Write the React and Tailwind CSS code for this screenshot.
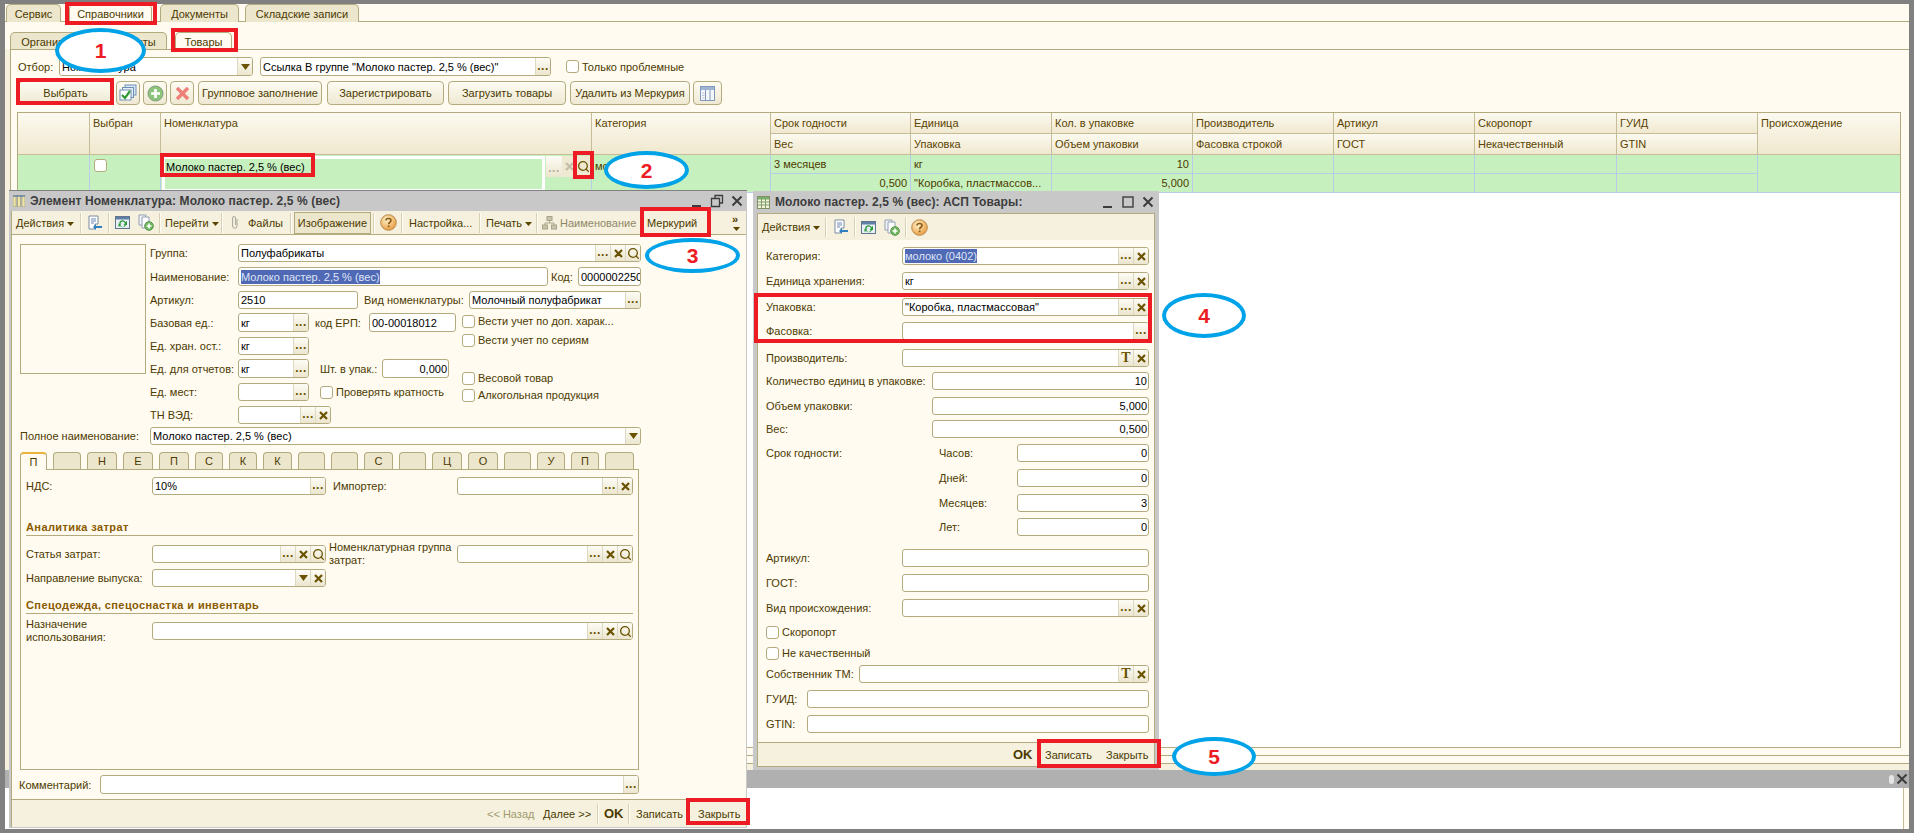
import React from "react";
import { Search } from "lucide-react";

const line = "border-[#b3ab7e]";

function Dots({ dim }) {
  return (
    <span className={`text-[12px] leading-none font-bold -mt-[1px] tracking-[0.5px] self-end pb-[3px] ${dim ? "text-[#b5b09a]" : "text-[#6b5200]"}`}>...</span>
  );
}

function Cross({ dim }) {
  return (
    <svg width="11" height="11" viewBox="0 0 11 11">
      <path d="M2 2 L9 9 M9 2 L2 9" stroke={dim ? "#c2bea8" : "#6b5200"} strokeWidth="2.2" fill="none" />
    </svg>
  );
}

function Arrow() {
  return (
    <svg width="9" height="6" viewBox="0 0 9 6">
      <path d="M0 0 H9 L4.5 6 Z" fill="#6b5200" />
    </svg>
  );
}

function Lens() {
  return <Search size={13} strokeWidth={2.4} className="text-[#6b5200]" />;
}

function Caret() {
  return (
    <svg width="7" height="4" viewBox="0 0 7 4" className="ml-[3px] mt-[2px]">
      <path d="M0 0 H7 L3.5 4 Z" fill="#5a4500" />
    </svg>
  );
}

function FieldBtn({ kind, w = "w-[15px]" }) {
  return (
    <div className={`${w} h-full flex items-center justify-center bg-gradient-to-b from-[#fdfcf5] to-[#ece6cf] border-l border-[#ddd8c0]`}>
      {kind === "dots" && <Dots />}
      {kind === "x" && <Cross />}
      {kind === "q" && <Lens />}
      {kind === "down" && <Arrow />}
      {kind === "t" && <span className="font-['Liberation_Serif',serif] font-bold text-[14px] leading-none text-[#6b5200]">T</span>}
    </div>
  );
}

function Field({ w, text, selected, right, btns = [], h = "h-[18px]" }) {
  return (
    <div className={`${w} ${h} shrink-0 flex border ${line} rounded-[3px] bg-white overflow-hidden`}>
      <div className={`flex-1 min-w-0 flex items-center whitespace-nowrap overflow-hidden text-black ${right ? "justify-end pr-[1px]" : "pl-[2px]"}`}>
        {selected ? <span className="bg-[#4f69b5] text-[#dfe4f5]">{text}</span> : text}
      </div>
      {btns.map((b, i) => (
        <FieldBtn key={i} kind={b} />
      ))}
    </div>
  );
}

function Check({ label, className = "" }) {
  return (
    <div className={`flex items-center h-[12px] ${className}`}>
      <div className={`w-[13px] h-[13px] shrink-0 border ${line} rounded-[3px] bg-white`} />
      <span className="ml-[3px] whitespace-nowrap">{label}</span>
    </div>
  );
}

function Sep({ className = "" }) {
  return <div className={`w-[2px] h-[20px] shrink-0 border-l border-[#d6d0b4] bg-[#fffdf5] ${className}`} />;
}

function SaveIcon() {
  return (
    <svg width="16" height="16" viewBox="0 0 16 16">
      <path d="M2 1 H11 V9 H8 V14 H2 Z" fill="#fff" stroke="#7c8aa0" />
      <path d="M4 4 H9 M4 6 H9 M4 8 H7" stroke="#6f87b5" />
      <path d="M15 11 H9 V9 L6 12 L9 15 V13 H15 Z" fill="#2f7fc0" />
    </svg>
  );
}

function RefreshIcon() {
  return (
    <svg width="15" height="15" viewBox="0 0 15 15">
      <rect x="0.5" y="1.5" width="14" height="12" fill="#e9f0f6" stroke="#62758c" />
      <rect x="1" y="2" width="13" height="2.5" fill="#5f7fa8" />
      <path d="M4 8 A3.5 3.5 0 0 1 10.5 7 L12 6 V10 H8.5 L9.8 8.8 A2 2 0 0 0 5.5 8.5 Z" fill="#2c9a3c" />
      <path d="M11 10 A3.5 3.5 0 0 1 5 11 L3.5 12 V8.5 H6.5 L5.5 9.8 A2 2 0 0 0 9.5 10 Z" fill="#2c9a3c" />
    </svg>
  );
}

function CopyIcon() {
  return (
    <svg width="16" height="17" viewBox="0 0 16 17">
      <path d="M1 1 H8 V11 H1 Z" fill="#f1f4f8" stroke="#93a0b2" />
      <path d="M4 3 H11 V14 H4 Z" fill="#fff" stroke="#93a0b2" />
      <circle cx="11" cy="12" r="4.3" fill="#6fb95f" stroke="#55904a" />
      <path d="M11 9.5 V14.5 M8.5 12 H13.5" stroke="#fff" strokeWidth="1.6" />
    </svg>
  );
}

function HelpIcon() {
  return (
    <svg width="17" height="17" viewBox="0 0 17 17">
      <defs>
        <radialGradient id="hg" cx="0.4" cy="0.35" r="0.7">
          <stop offset="0" stopColor="#fdf0c8" />
          <stop offset="1" stopColor="#e89a3c" />
        </radialGradient>
      </defs>
      <circle cx="8.5" cy="8.5" r="7.8" fill="url(#hg)" stroke="#b98a4a" />
      <path d="M6 6.5 C6 3.8 11 3.8 11 6.5 C11 8.3 8.6 8.2 8.6 10.2" stroke="#8a5a14" strokeWidth="1.6" fill="none" />
      <rect x="7.8" y="11.5" width="1.7" height="1.7" fill="#8a5a14" />
    </svg>
  );
}

function TreeIcon() {
  return (
    <svg width="15" height="14" viewBox="0 0 15 14">
      <rect x="5" y="0.5" width="5" height="4" fill="#c9c3ab" stroke="#a8a288" />
      <rect x="0.5" y="9" width="5" height="4" fill="#c9c3ab" stroke="#a8a288" />
      <rect x="9.5" y="9" width="5" height="4" fill="#c9c3ab" stroke="#a8a288" />
      <path d="M7.5 5 V7 H3 V9 M7.5 7 H12 V9" stroke="#a8a288" fill="none" />
    </svg>
  );
}

function ColumnsIcon() {
  return (
    <svg width="15" height="15" viewBox="0 0 15 15">
      <rect x="0.5" y="0.5" width="14" height="14" fill="#f3f6fb" stroke="#8298b8" />
      <rect x="1" y="1" width="13" height="3" fill="#9fb5d4" />
      <path d="M5.5 4 V14 M10 4 V14" stroke="#8298b8" />
      <path d="M2 7 H4.5 M2 9.5 H4.5 M2 12 H4.5" stroke="#b9c7dc" />
    </svg>
  );
}

function WinColumnsIcon() {
  return (
    <svg width="12" height="12" viewBox="0 0 12 12">
      <rect x="0" y="0" width="3" height="12" fill="#efe6a8" stroke="#8a8a6a" strokeWidth="0.6" />
      <rect x="4.5" y="0" width="3" height="12" fill="#efe6a8" stroke="#8a8a6a" strokeWidth="0.6" />
      <rect x="9" y="0" width="3" height="12" fill="#efe6a8" stroke="#8a8a6a" strokeWidth="0.6" />
      <path d="M0 1 H12" stroke="#5f7fa8" strokeWidth="1.4" />
    </svg>
  );
}

function WinGridIcon() {
  return (
    <svg width="13" height="13" viewBox="0 0 13 13">
      <rect x="0.5" y="0.5" width="12" height="12" fill="#f5f3dc" stroke="#7f8f6a" />
      <rect x="1" y="1" width="11" height="2.5" fill="#7bae6a" />
      <path d="M4.5 3 V12 M8.5 3 V12 M1 6 H12 M1 9 H12" stroke="#7f9f6a" />
    </svg>
  );
}

function StackIcon() {
  return (
    <svg width="18" height="18" viewBox="0 0 18 18">
      <rect x="6" y="1" width="11" height="10" fill="#d7e5f4" stroke="#6f8fb5" />
      <rect x="3.5" y="3.5" width="11" height="10" fill="#e4eef8" stroke="#6f8fb5" />
      <rect x="1" y="6" width="11" height="10" fill="#fff" stroke="#6f8fb5" />
      <path d="M3 11 L6 14 L11 7" stroke="#2f9a35" strokeWidth="2.2" fill="none" />
    </svg>
  );
}

function PlusIcon() {
  return (
    <svg width="17" height="17" viewBox="0 0 17 17">
      <circle cx="8.5" cy="8.5" r="7.5" fill="#8cc47c" stroke="#7f9a78" />
      <path d="M8.5 4 V13 M4 8.5 H13" stroke="#fff" strokeWidth="2.6" />
    </svg>
  );
}

function RedCross() {
  return (
    <svg width="15" height="15" viewBox="0 0 15 15">
      <path d="M2 2 L13 13 M13 2 L2 13" stroke="#ef8078" strokeWidth="3.4" />
    </svg>
  );
}

function ToolBtn({ w, children }) {
  return (
    <div className={`${w} h-[24px] shrink-0 flex items-center justify-center whitespace-nowrap border ${line} rounded-[4px] bg-gradient-to-b from-[#fdfcf3] to-[#efe9d2]`}>
      {children}
    </div>
  );
}

function Redbox({ className }) {
  return <div className={`absolute border-[4px] border-[#ed1c24] pointer-events-none ${className}`} />;
}

function Oval({ className, n }) {
  return (
    <div className={`absolute flex items-center justify-center rounded-[50%] border-[4px] border-[#00a2e8] bg-white ${className}`}>
      <span className="font-bold text-[#ed1c24] text-[21px] leading-none">{n}</span>
    </div>
  );
}

function MainTab({ w, active, children }) {
  return (
    <div className={`${w} h-[18px] flex items-center justify-center whitespace-nowrap rounded-t-[5px] border border-b-0 ${line} ${active ? "bg-[#fffbf0]" : "bg-[#ece6cd]"}`}>
      {children}
    </div>
  );
}

function Head({ className = "", children }) {
  return (
    <div className={`pl-[3px] pt-[3px] whitespace-nowrap border-r border-b border-[#c6bd98] bg-gradient-to-b from-[#fcfaf0] to-[#f0e8cf] text-[#5a4300] ${className}`}>
      {children}
    </div>
  );
}

function Cell({ className = "", children }) {
  return (
    <div className={`px-[3px] flex items-center whitespace-nowrap border-r border-b border-[#b8cbe8] bg-[#c6f0bd] ${className}`}>
      {children}
    </div>
  );
}

function Table() {
  return (
    <div className={`mt-[7px] h-[636px] mr-[8px] border ${line} bg-white`}>
      <div className="grid grid-cols-[72px_71px_431px_179px_140px_141px_141px_141px_141px_142px_141px_142px] grid-rows-[21px_21px_19px_19px]">
        <Head className="row-span-2" />
        <Head className="row-span-2">Выбран</Head>
        <Head className="row-span-2">Номенклатура</Head>
        <Head className="row-span-2">Категория</Head>
        <Head>Срок годности</Head>
        <Head>Единица</Head>
        <Head>Кол. в упаковке</Head>
        <Head>Производитель</Head>
        <Head>Артикул</Head>
        <Head>Скоропорт</Head>
        <Head>ГУИД</Head>
        <Head className="row-span-2 border-r-0">Происхождение</Head>
        <Head>Вес</Head>
        <Head>Упаковка</Head>
        <Head>Объем упаковки</Head>
        <Head>Фасовка строкой</Head>
        <Head>ГОСТ</Head>
        <Head>Некачественный</Head>
        <Head>GTIN</Head>

        <Cell className="row-span-2" />
        <Cell className="row-span-2 items-start pt-[4px]">
          <div className={`w-[13px] h-[13px] ml-[1px] border ${line} rounded-[3px] bg-white`} />
        </Cell>
        <Cell className="row-span-2 !px-0 items-start">
          <div className="w-[385px] h-[36px] ml-[1px] mt-[1px] border-[3px] border-[#ffffff] pl-[1px] pt-[1px] text-black">Молоко пастер. 2,5 % (вес)</div>
          <div className="h-[21px] ml-[1px] mt-[1px] flex bg-[#efe9d2]">
            <div className="w-[16px] h-full flex items-center justify-center bg-gradient-to-b from-[#fdfcf5] to-[#ece6cf]"><Dots dim /></div>
            <div className="w-[14px] h-full flex items-center justify-center"><Cross dim /></div>
            <div className="w-[15px] h-full flex items-center justify-center"><Lens /></div>
          </div>
        </Cell>
        <Cell className="row-span-2 items-start pt-[4px]">молоко (0402)</Cell>
        <Cell>3 месяцев</Cell>
        <Cell>кг</Cell>
        <Cell className="justify-end">10</Cell>
        <Cell />
        <Cell />
        <Cell />
        <Cell />
        <Cell className="row-span-2 border-r-0" />
        <Cell className="justify-end">0,500</Cell>
        <Cell>"Коробка, пластмассов...</Cell>
        <Cell className="justify-end">5,000</Cell>
        <Cell />
        <Cell />
        <Cell />
        <Cell />
      </div>
    </div>
  );
}

function WinTitle({ icon, title, controls, h }) {
  return (
    <div className={`${h} shrink-0 flex items-center bg-[#c8c8c8]`}>
      {icon}
      <span className="ml-[5px] font-bold text-[12px] tracking-[0.1px] text-[#3c3c3c] whitespace-nowrap">{title}</span>
      <div className="ml-auto flex items-center">{controls}</div>
    </div>
  );
}

function WinBtn({ kind, className = "" }) {
  return (
    <svg width="14" height="14" viewBox="0 0 14 14" className={className}>
      {kind === "min" && <rect x="2" y="11" width="9" height="2" fill="#3c3c3c" />}
      {kind === "max" && <rect x="2" y="2" width="10" height="10" fill="none" stroke="#3c3c3c" strokeWidth="1.4" />}
      {kind === "restore" && <path d="M5 4 V1.5 H12.5 V9 H10 M1.5 4.5 H9.5 V12.5 H1.5 Z" fill="none" stroke="#3c3c3c" strokeWidth="1.3" />}
      {kind === "x" && <path d="M2.5 2.5 L11.5 11.5 M11.5 2.5 L2.5 11.5" stroke="#3c3c3c" strokeWidth="2" />}
    </svg>
  );
}

function Heading({ className = "", children }) {
  return (
    <div className={`h-[16px] border-b ${line} font-bold tracking-[0.4px] text-[#8a5a00] whitespace-nowrap ${className}`}>
      {children}
    </div>
  );
}

const innerTabs = [
  ["П", "w-[27px]"], ["", "w-[28px]"], ["Н", "w-[30px]"], ["Е", "w-[30px]"], ["П", "w-[30px]"], ["С", "w-[28px]"],
  ["К", "w-[28px]"], ["К", "w-[29px]"], ["", "w-[27px]"], ["", "w-[27px]"], ["С", "w-[29px]"], ["", "w-[27px]"],
  ["Ц", "w-[30px]"], ["О", "w-[30px]"], ["", "w-[27px]"], ["У", "w-[28px]"], ["П", "w-[28px]"], ["", "w-[29px]"],
];

function ElementWindow() {
  return (
    <div className="absolute left-[9px] top-[190px] w-[738px] h-[638px] flex flex-col bg-[#c8c8c8] border-t border-[#808080]">
      <div className="pl-[4px] pr-[3px]">
        <WinTitle
          h="h-[20px]"
          icon={<WinColumnsIcon />}
          title="Элемент Номенклатура: Молоко пастер. 2,5 % (вес)"
          controls={
            <>
              <WinBtn kind="min" />
              <WinBtn kind="restore" className="ml-[6px]" />
              <WinBtn kind="x" className="ml-[6px]" />
            </>
          }
        />
      </div>
      <div className={`flex-1 ml-[2px] mr-[1px] mb-[1px] flex flex-col bg-[#fffbf0] border-l ${line}`}>
        <div className={`h-[24px] shrink-0 flex items-center pl-[4px] pr-[6px] bg-[#f5f1de] border-b ${line} whitespace-nowrap`}>
          <span className="w-[64px] flex items-center">Действия<Caret /></span>
          <Sep />
          <span className="ml-[5px]"><SaveIcon /></span>
          <Sep className="ml-[5px]" />
          <span className="ml-[5px]"><RefreshIcon /></span>
          <span className="ml-[8px]"><CopyIcon /></span>
          <Sep className="ml-[5px]" />
          <span className="ml-[4px] w-[56px] flex items-center">Перейти<Caret /></span>
          <Sep />
          <svg width="8" height="15" viewBox="0 0 8 15" className="ml-[8px]">
            <path d="M6 4 V11 A2.2 2.2 0 0 1 1.6 11 V3 A1.5 1.5 0 0 1 4.6 3 V10" fill="none" stroke="#a8a49a" strokeWidth="1" />
          </svg>
          <span className="ml-[9px] w-[37px]">Файлы</span>
          <Sep className="ml-[5px]" />
          <span className={`ml-[2px] w-[77px] h-[22px] flex items-center justify-center border ${line} bg-[#ece6cd]`}>Изображение</span>
          <Sep className="ml-[2px]" />
          <span className="ml-[5px]"><HelpIcon /></span>
          <Sep className="ml-[4px]" />
          <span className="ml-[6px] w-[65px]">Настройка...</span>
          <Sep className="ml-[5px]" />
          <span className="ml-[5px] w-[50px] flex items-center">Печать<Caret /></span>
          <Sep />
          <span className="ml-[4px]"><TreeIcon /></span>
          <span className="ml-[3px] w-[76px] text-[#8f8868]">Наименование</span>
          <span className="ml-[11px]">Меркурий</span>
          <div className="ml-auto flex flex-col items-center">
            <span className="text-[11px] leading-none font-bold">»</span>
            <Caret />
          </div>
        </div>

        <div className="pl-[8px] pt-[9px]">
          <div className="flex">
            <div className={`w-[126px] h-[130px] shrink-0 border ${line}`} />
            <div className="ml-[4px] w-[491px] whitespace-nowrap">
              <div className="flex items-center">
                <span className="w-[88px]">Группа:</span>
                <Field w="w-[403px]" text="Полуфабрикаты" btns={["dots", "x", "q"]} />
              </div>
              <div className="mt-[5px] flex items-center">
                <span className="w-[88px]">Наименование:</span>
                <Field w="w-[310px]" h="h-[19px]" text="Молоко пастер. 2,5 % (вес)" selected />
                <span className="ml-[3px] w-[27px]">Код:</span>
                <Field w="w-[63px]" h="h-[19px]" text="0000002250" />
              </div>
              <div className="mt-[5px] flex items-center">
                <span className="w-[88px]">Артикул:</span>
                <Field w="w-[120px]" text="2510" />
                <span className="ml-[6px] w-[105px]">Вид номенклатуры:</span>
                <Field w="w-[172px]" text="Молочный полуфабрикат" btns={["dots"]} />
              </div>
              <div className="flex">
                <div className="w-[312px]">
                  <div className="mt-[4px] flex items-center">
                    <span className="w-[88px]">Базовая ед.:</span>
                    <Field w="w-[71px]" h="h-[19px]" text="кг" btns={["dots"]} />
                    <span className="ml-[6px] w-[54px]">код ЕРП:</span>
                    <Field w="w-[87px]" h="h-[19px]" text="00-00018012" />
                  </div>
                  <div className="mt-[5px] flex items-center">
                    <span className="w-[88px]">Ед. хран. ост.:</span>
                    <Field w="w-[71px]" text="кг" btns={["dots"]} />
                  </div>
                  <div className="mt-[4px] flex items-center">
                    <span className="w-[88px]">Ед. для отчетов:</span>
                    <Field w="w-[71px]" h="h-[19px]" text="кг" btns={["dots"]} />
                    <span className="ml-[11px] w-[62px]">Шт. в упак.:</span>
                    <Field w="w-[67px]" h="h-[19px]" text="0,000" right />
                  </div>
                  <div className="mt-[5px] flex items-center">
                    <span className="w-[88px]">Ед. мест:</span>
                    <Field w="w-[71px]" text="" btns={["dots"]} />
                    <Check label="Проверять кратность" className="ml-[11px]" />
                  </div>
                  <div className="mt-[5px] flex items-center">
                    <span className="w-[88px]">ТН ВЭД:</span>
                    <Field w="w-[93px]" text="" btns={["dots", "x"]} />
                  </div>
                </div>
                <div>
                  <Check label="Вести учет по доп.  харак..." className="mt-[6px]" />
                  <Check label="Вести учет по сериям" className="mt-[7px]" />
                  <Check label="Весовой товар" className="mt-[26px]" />
                  <Check label="Алкогольная продукция" className="mt-[5px]" />
                </div>
              </div>
            </div>
          </div>

          <div className="mt-[3px] flex items-center">
            <span className="w-[130px] whitespace-nowrap">Полное наименование:</span>
            <Field w="w-[491px]" text="Молоко пастер. 2,5 % (вес)" btns={["down"]} />
          </div>

          <div className="mt-[7px] flex gap-[6px] h-[17px]">
            {innerTabs.map(([label, w], i) => (
              <div
                key={i}
                className={`${w} flex items-center justify-center rounded-t-[4px] border ${line} ${i === 0 ? "bg-[#fffbf0] border-b-0 border-t-[#e8b23c] border-t-2 h-[18px] z-10" : "bg-[#ece6cd] border-b-0"}`}
              >
                {label}
              </div>
            ))}
          </div>
          <div className={`w-[619px] h-[301px] border ${line} px-[5px]`}>
            <div className="mt-[7px] flex items-center">
              <span className="w-[126px]">НДС:</span>
              <Field w="w-[174px]" text="10%" btns={["dots"]} />
              <span className="ml-[7px] w-[124px]">Импортер:</span>
              <Field w="w-[176px]" text="" btns={["dots", "x"]} />
            </div>
            <Heading className="mt-[25px]">Аналитика затрат</Heading>
            <div className="mt-[9px] h-[18px] flex items-center">
              <span className="w-[126px]">Статья затрат:</span>
              <Field w="w-[174px]" text="" btns={["dots", "x", "q"]} />
              <span className="ml-[3px] w-[128px] leading-[13px]">Номенклатурная группа затрат:</span>
              <Field w="w-[176px]" text="" btns={["dots", "x", "q"]} />
            </div>
            <div className="mt-[6px] flex items-center">
              <span className="w-[126px] whitespace-nowrap">Направление выпуска:</span>
              <Field w="w-[174px]" text="" btns={["down", "x"]} />
            </div>
            <Heading className="mt-[11px]">Спецодежда, спецоснастка и инвентарь</Heading>
            <div className="mt-[8px] h-[18px] flex items-center">
              <span className="w-[126px] leading-[13px]">Назначение использования:</span>
              <Field w="w-[481px]" text="" btns={["dots", "x", "q"]} />
            </div>
          </div>
          <div className="mt-[5px] flex items-center">
            <span className="w-[81px] -ml-[1px]">Комментарий:</span>
            <Field w="w-[539px]" h="h-[19px]" text="" btns={["dots"]} />
          </div>
        </div>

        <div className={`mt-auto h-[28px] flex items-center justify-end pr-[5px] bg-[#f5f1de] border-t ${line} whitespace-nowrap`}>
          <span className="w-[56px] text-[#a39a70]">&lt;&lt; Назад</span>
          <span className="w-[54px]">Далее &gt;&gt;</span>
          <Sep />
          <span className="ml-[5px] w-[24px] font-bold text-[13px]">OK</span>
          <Sep />
          <span className="ml-[6px] w-[62px]">Записать</span>
          <span className="w-[43px]">Закрыть</span>
        </div>
      </div>
    </div>
  );
}

function AspRow({ className = "", label, children }) {
  return (
    <div className={`flex items-center whitespace-nowrap ${className}`}>
      {label}
      {children}
    </div>
  );
}

function AspWindow() {
  const lw = "w-[136px]";
  return (
    <div className="absolute left-[753px] top-[191px] w-[406px] h-[579px] flex flex-col bg-[#c8c8c8] px-[4px] pb-[3px]">
      <WinTitle
        h="h-[22px]"
        icon={<WinGridIcon />}
        title="Молоко пастер. 2,5 % (вес): АСП Товары:"
        controls={
          <>
            <WinBtn kind="min" />
            <WinBtn kind="max" className="ml-[6px]" />
            <WinBtn kind="x" className="ml-[6px]" />
          </>
        }
      />
      <div className={`flex-1 flex flex-col bg-[#fffbf0] border ${line}`}>
        <div className="h-[26px] shrink-0 flex items-center pl-[4px] bg-[#f5f1de]">
          <span className="w-[63px] flex items-center">Действия<Caret /></span>
          <Sep />
          <span className="ml-[6px]"><SaveIcon /></span>
          <Sep className="ml-[5px]" />
          <span className="ml-[5px]"><RefreshIcon /></span>
          <span className="ml-[8px]"><CopyIcon /></span>
          <Sep className="ml-[5px]" />
          <span className="ml-[4px]"><HelpIcon /></span>
        </div>
        <div className="pl-[8px] w-[392px]">
          <AspRow className="mt-[7px]" label={<span className={lw}>Категория:</span>}>
            <Field w="w-[247px]" text="молоко (0402)" selected btns={["dots", "x"]} />
          </AspRow>
          <AspRow className="mt-[7px]" label={<span className={lw}>Единица хранения:</span>}>
            <Field w="w-[247px]" text="кг" btns={["dots", "x"]} />
          </AspRow>
          <AspRow className="mt-[8px]" label={<span className={lw}>Упаковка:</span>}>
            <Field w="w-[247px]" text={'"Коробка, пластмассовая"'} btns={["dots", "x"]} />
          </AspRow>
          <AspRow className="mt-[6px]" label={<span className={lw}>Фасовка:</span>}>
            <Field w="w-[247px]" text="" btns={["dots"]} />
          </AspRow>
          <AspRow className="mt-[9px]" label={<span className={lw}>Производитель:</span>}>
            <Field w="w-[247px]" text="" btns={["t", "x"]} />
          </AspRow>
          <AspRow className="mt-[5px]" label={<span className="w-[166px]">Количество единиц в упаковке:</span>}>
            <Field w="w-[217px]" text="10" right />
          </AspRow>
          <AspRow className="mt-[7px]" label={<span className="w-[166px]">Объем упаковки:</span>}>
            <Field w="w-[217px]" text="5,000" right />
          </AspRow>
          <AspRow className="mt-[5px]" label={<span className="w-[166px]">Вес:</span>}>
            <Field w="w-[217px]" text="0,500" right />
          </AspRow>
          <AspRow className="mt-[6px]" label={<><span className="w-[173px]">Срок годности:</span><span className="w-[78px]">Часов:</span></>}>
            <Field w="w-[132px]" text="0" right />
          </AspRow>
          <AspRow className="mt-[7px] pl-[173px]" label={<span className="w-[78px]">Дней:</span>}>
            <Field w="w-[132px]" text="0" right />
          </AspRow>
          <AspRow className="mt-[7px] pl-[173px]" label={<span className="w-[78px]">Месяцев:</span>}>
            <Field w="w-[132px]" text="3" right />
          </AspRow>
          <AspRow className="mt-[6px] pl-[173px]" label={<span className="w-[78px]">Лет:</span>}>
            <Field w="w-[132px]" text="0" right />
          </AspRow>
          <AspRow className="mt-[13px]" label={<span className={lw}>Артикул:</span>}>
            <Field w="w-[247px]" text="" />
          </AspRow>
          <AspRow className="mt-[7px]" label={<span className={lw}>ГОСТ:</span>}>
            <Field w="w-[247px]" text="" />
          </AspRow>
          <AspRow className="mt-[7px]" label={<span className={lw}>Вид происхождения:</span>}>
            <Field w="w-[247px]" text="" btns={["dots", "x"]} />
          </AspRow>
          <Check label="Скоропорт" className="mt-[9px]" />
          <Check label="Не качественный" className="mt-[9px]" />
          <AspRow className="mt-[6px]" label={<span className="w-[93px]">Собственник ТМ:</span>}>
            <Field w="w-[290px]" text="" btns={["t", "x"]} />
          </AspRow>
          <AspRow className="mt-[7px]" label={<span className="w-[41px]">ГУИД:</span>}>
            <Field w="w-[342px]" text="" />
          </AspRow>
          <AspRow className="mt-[7px]" label={<span className="w-[41px]">GTIN:</span>}>
            <Field w="w-[342px]" text="" />
          </AspRow>
        </div>
        <div className={`mt-auto h-[24px] flex items-center justify-end pr-[5px] bg-[#f5f1de] border-t ${line}`}>
          <span className="w-[32px] font-bold text-[13px]">OK</span>
          <span className="w-[61px]">Записать</span>
          <span className="w-[43px]">Закрыть</span>
        </div>
      </div>
    </div>
  );
}

export default function App() {
  return (
    <div className="relative w-[1914px] h-[833px] overflow-hidden pt-[4px] pb-[4px] px-[5px] bg-[#808080] font-['Liberation_Sans',sans-serif] text-[11px] leading-[14px] text-[#4c3a00]">
      <div className="h-full flex flex-col bg-[#fffbf0]">
        <div className={`h-[18px] shrink-0 flex pl-[1px] border-b ${line}`}>
          <MainTab w="w-[55px]">Сервис</MainTab>
          <MainTab w="w-[83px] ml-[8px]" active>Справочники</MainTab>
          <MainTab w="w-[79px] ml-[8px]">Документы</MainTab>
          <MainTab w="w-[114px] ml-[6px]">Складские записи</MainTab>
        </div>

        <div className="h-[748px] shrink-0 flex flex-col bg-[#f5f1de]">
          <div className="pt-[10px] h-[27px] shrink-0 flex pl-[5px] bg-[#fffbf0]">
            <MainTab w="w-[157px]">Организации/Контрагенты</MainTab>
            <MainTab w="w-[57px] ml-[8px]" active>Товары</MainTab>
          </div>
          <div className={`flex-1 mb-[6px] ml-[5px] pl-[6px] pt-[7px] bg-[#fffbf0] border-t border-l border-b ${line}`}>
            <div className="flex items-center h-[19px]">
              <span className="ml-[1px] w-[41px]">Отбор:</span>
              <Field w="w-[194px]" h="h-[19px]" text="Номенклатура" btns={["down"]} />
              <div className="w-[7px]" />
              <Field w="w-[291px]" h="h-[19px]" text={'Ссылка В группе "Молоко пастер. 2,5 % (вес)"'} btns={["dots"]} />
              <Check label="Только проблемные" className="ml-[15px]" />
            </div>
            <div className="mt-[5px] flex">
              <ToolBtn w="w-[95px] ml-[1px]">Выбрать</ToolBtn>
              <ToolBtn w="w-[24px] ml-[3px]"><StackIcon /></ToolBtn>
              <ToolBtn w="w-[24px] ml-[3px]"><PlusIcon /></ToolBtn>
              <ToolBtn w="w-[24px] ml-[3px]"><RedCross /></ToolBtn>
              <ToolBtn w="w-[124px] ml-[4px]">Групповое заполнение</ToolBtn>
              <ToolBtn w="w-[117px] ml-[5px]">Зарегистрировать</ToolBtn>
              <ToolBtn w="w-[118px] ml-[4px]">Загрузить товары</ToolBtn>
              <ToolBtn w="w-[120px] ml-[4px]">Удалить из Меркурия</ToolBtn>
              <ToolBtn w="w-[29px] ml-[3px]"><ColumnsIcon /></ToolBtn>
            </div>
            <Table />
            <div className={`mt-[7px] border-t ${line}`} />
          </div>
        </div>

        <div className="h-[18px] shrink-0 flex items-center justify-end bg-[#b0b0b0]">
          <span className="w-[5px] h-[9px] mr-[1px] rounded-full bg-[#e6e6e6]" />
          <WinBtn kind="x" />
        </div>
        <div className="flex-1 flex justify-end bg-white">
          <div className="w-[6px] border-l border-[#c6bd98] bg-[#fffbf0]" />
        </div>
      </div>

      <ElementWindow />
      <AspWindow />

      <Redbox className="left-[65px] top-[2px] w-[92px] h-[23px]" />
      <Redbox className="left-[171px] top-[28px] w-[67px] h-[24px]" />
      <Redbox className="left-[16px] top-[78px] w-[98px] h-[27px]" />
      <Redbox className="left-[160px] top-[153px] w-[155px] h-[24px]" />
      <Redbox className="left-[573px] top-[151px] w-[21px] h-[28px]" />
      <Redbox className="left-[640px] top-[207px] w-[71px] h-[30px]" />
      <Redbox className="left-[754px] top-[293px] w-[398px] h-[50px]" />
      <Redbox className="left-[1037px] top-[739px] w-[124px] h-[29px]" />
      <Redbox className="left-[686px] top-[798px] w-[64px] h-[27px]" />

      <Oval className="left-[55px] top-[28px] w-[91px] h-[45px]" n="1" />
      <Oval className="left-[604px] top-[151px] w-[85px] h-[38px]" n="2" />
      <Oval className="left-[645px] top-[238px] w-[95px] h-[35px]" n="3" />
      <Oval className="left-[1162px] top-[293px] w-[84px] h-[45px]" n="4" />
      <Oval className="left-[1172px] top-[737px] w-[84px] h-[39px]" n="5" />
    </div>
  );
}
